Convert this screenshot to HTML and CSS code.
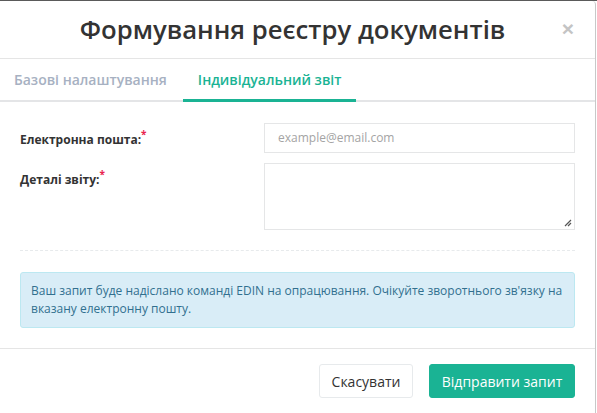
FILE: index.html
```html
<!DOCTYPE html>
<html lang="uk">
<head>
<meta charset="utf-8">
<link rel="stylesheet" href="styles.css">
</head>
<body>
<div class="modal">
  <div class="modal-header">
    <h4 class="modal-title">Формування реєстру документів</h4>
    <span class="close">×</span>
  </div>
  <div class="tabs">
    <div class="tab">Базові налаштування</div>
    <div class="tab active">Індивідуальний звіт</div>
  </div>
  <div class="modal-body">
    <div class="form-row">
      <label class="label">Електронна пошта:<sup class="req">*</sup></label>
      <div class="field"><div class="input placeholder">example@email.com</div></div>
    </div>
    <div class="form-row last">
      <label class="label">Деталі звіту:<sup class="req">*</sup></label>
      <div class="field">
        <div class="textarea">
          <svg class="grip" width="8" height="8" viewBox="0 0 8 8"><path d="M7 1 L1 7 M7 4 L4 7" stroke="#555" stroke-width="1.2" fill="none"/></svg>
        </div>
      </div>
    </div>
    <div class="divider"></div>
    <div class="alert">Ваш запит буде надіслано команді EDIN на опрацювання. Очікуйте зворотнього зв'язку на вказану електронну пошту.</div>
  </div>
  <div class="modal-footer">
    <button class="btn btn-white">Скасувати</button>
    <button class="btn btn-primary">Відправити запит</button>
  </div>
</div>
</body>
</html>
```
FILE: styles.css
```css
* { box-sizing: border-box; }
html, body { margin: 0; padding: 0; }
body {
  background: #fff;
  font-family: "Open Sans", "Liberation Sans", sans-serif;
  font-size: 12px;
  color: #676a6c;
  border-top: 1px solid #5a5a5a;
  width: 597px;
  height: 413px;
  overflow: hidden;
}
.modal {
  width: 596px;
  border-right: 1px solid #c8c8c8;
  border-top-right-radius: 4px;
  background: #fff;
  height: 412px;
}
.modal-header {
  height: 58px;
  border-bottom: 1px solid #e5e5e5;
  display: flex;
  align-items: center;
  justify-content: center;
  padding-right: 10px;
  position: relative;
}
.modal-title {
  margin: 0;
  font-size: 25.7px;
  font-weight: 600;
  color: #333;
}
.close {
  position: absolute;
  right: 21px;
  top: 17px;
  font-size: 21px;
  font-weight: 700;
  color: #c4c4c4;
  line-height: 1;
  font-family: "Liberation Sans", sans-serif;
}
.tabs {
  display: flex;
  gap: 1px;
  height: 43px;
  border-bottom: 2px solid #e4e5e7;
}
.tab {
  padding: 1px 15px 0 14px;
  font-size: 14px;
  font-weight: 600;
  color: #a7b1c2;
  display: flex;
  align-items: center;
  margin-bottom: -2px;
  border-bottom: 3px solid transparent;
}
.tab.active {
  color: #1ab394;
  border-bottom-color: #1ab394;
  padding-left: 15px;
}
.modal-body {
  padding: 21px 20px 20px;
}
.form-row {
  display: grid;
  grid-template-columns: 244px 1fr;
  margin-bottom: 10px;
}
.form-row.last { margin-bottom: 0; }
.label {
  font-weight: 700;
  color: #333;
  font-size: 12px;
  padding-top: 5px;
}
.req {
  color: #e8254f;
  font-size: 10px;
  font-weight: 700;
  position: relative;
  top: -1px;
}
.input {
  height: 30px;
  border: 1px solid #e5e6e7;
  padding: 5px 13px;
  line-height: 18px;
  font-size: 12px;
}
.placeholder { color: #a4a4a4; }
.textarea {
  height: 67px;
  border: 1px solid #e5e6e7;
  position: relative;
}
.grip {
  position: absolute;
  right: 2px;
  bottom: 2px;
}
.divider {
  border-top: 1px dashed #e7eaec;
  margin: 20px 0 21px;
}
.alert {
  background: #d9edf7;
  border: 1px solid #bce8f1;
  color: #31708f;
  border-radius: 3px;
  padding: 9px 10px;
  line-height: 18px;
  font-size: 12px;
}
.modal-footer {
  border-top: 1px solid #e5e5e5;
  padding: 15px 20px 15px;
  display: flex;
  justify-content: flex-end;
  gap: 16px;
}
.btn {
  font-family: "Open Sans", "Liberation Sans", sans-serif;
  font-size: 14px;
  height: 34px;
  padding: 0 8px;
  border-radius: 3px;
  border: 1px solid #e7eaec;
  white-space: nowrap;
}
.btn-white {
  background: #fff;
  color: #333;
  width: 94px;
}
.btn-primary {
  background: #1ab394;
  border-color: #1ab394;
  color: #fff;
  width: 146px;
}
```
